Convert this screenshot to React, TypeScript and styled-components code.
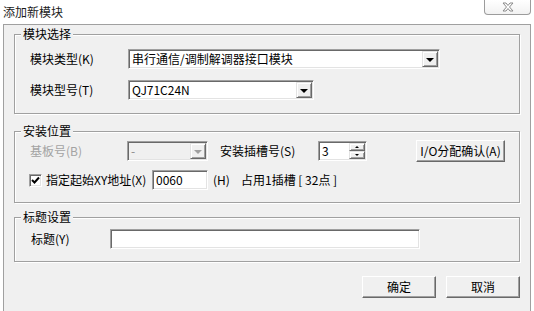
import { styled, createGlobalStyle } from "styled-components";

const GlobalStyle = createGlobalStyle`
  html, body {
    margin: 0;
    padding: 0;
    background: #ffffff;
  }
  body {
    font-family: "Noto Sans CJK SC", "Liberation Sans", sans-serif;
    font-size: 12px;
    line-height: 14px;
    color: #000000;
  }
`;

export default function App() {
  return (
    <Window>
      <GlobalStyle />
      <TitleBar>
        <Title>添加新模块</Title>
        <CloseButton>
          <svg width="12" height="10" viewBox="0 0 12 10">
            <path
              d="M1 1 H4 L6 3.5 L8 1 H11 L7.5 5 L11 9 H8 L6 6.5 L4 9 H1 L4.5 5 Z"
              fill="#ffffff"
              stroke="#8a8a8a"
              strokeWidth="1"
            />
          </svg>
        </CloseButton>
      </TitleBar>
      <Frame>
        <Group>
          <Legend>模块选择</Legend>
          <GroupBody $gap={11}>
            <Row>
              <Label $w={98}>模块类型(K)</Label>
              <Combo $w={312}>
                <ComboText>串行通信/调制解调器接口模块</ComboText>
                <DropButton>
                  <Arrow />
                </DropButton>
              </Combo>
            </Row>
            <Row>
              <Label $w={98}>模块型号(T)</Label>
              <Combo $w={186}>
                <ComboText>QJ71C24N</ComboText>
                <DropButton>
                  <Arrow />
                </DropButton>
              </Combo>
            </Row>
          </GroupBody>
        </Group>

        <Group $top={8} $bottom={12} $mt={17}>
          <Legend>安装位置</Legend>
          <GroupBody $gap={8}>
            <Row $h={22}>
              <Label $w={97} $disabled>
                基板号(B)
              </Label>
              <Combo $w={81} $disabled>
                <ComboText $disabled>-</ComboText>
                <DropButton>
                  <Arrow $disabled />
                </DropButton>
              </Combo>
              <Label $w={98} $ml={12}>
                安装插槽号(S)
              </Label>
              <Spin>
                <ComboText>3</ComboText>
                <SpinButtons>
                  <SpinButton>
                    <SmallArrow $up />
                  </SpinButton>
                  <SpinButton>
                    <SmallArrow />
                  </SpinButton>
                </SpinButtons>
              </Spin>
              <PushButton $w={89} $h={22} $ml={49}>
                I/O分配确认(A)
              </PushButton>
            </Row>
            <Row>
              <CheckBox>
                <svg width="9" height="9" viewBox="0 0 9 9">
                  <path d="M1 4 L3.5 6.5 L8 1.5" fill="none" stroke="#000" strokeWidth="2" />
                </svg>
              </CheckBox>
              <Label $w={106} $ml={4}>
                指定起始XY地址(X)
              </Label>
              <TextField $w={56}>0060</TextField>
              <Label $ml={5} $w={28}>
                (H)
              </Label>
              <Label>占用1插槽 [ 32点 ]</Label>
            </Row>
          </GroupBody>
        </Group>

        <Group $top={11} $bottom={12} $mt={14}>
          <Legend>标题设置</Legend>
          <GroupBody>
            <Row>
              <Label $w={79} $ml={1}>
                标题(Y)
              </Label>
              <TextField $w={310} />
            </Row>
          </GroupBody>
        </Group>

        <Buttons>
          <PushButton $w={74} $h={22}>
            确定
          </PushButton>
          <PushButton $w={74} $h={22}>
            取消
          </PushButton>
        </Buttons>
      </Frame>
    </Window>
  );
}

const Window = styled.div`
  width: 534px;
  height: 311px;
  background: #ffffff;
  overflow: hidden;
`;

const TitleBar = styled.div`
  display: flex;
  align-items: flex-start;
  height: 24px;
  padding: 0 3px;
`;

const Title = styled.div`
  margin-top: 5px;
  line-height: 14px;
  font-size: 12px;
  color: #1a1a1a;
`;

const CloseButton = styled.div`
  margin-left: auto;
  margin-right: 0;
  width: 45px;
  height: 14px;
  border: 1px solid #9c9c9c;
  border-top: none;
  border-radius: 0 0 4px 4px;
  background: linear-gradient(#ffffff, #f2f2f2);
  display: flex;
  align-items: center;
  justify-content: center;
`;

const Frame = styled.div`
  margin-left: 3px;
  width: 506px;
  height: 274px;
  padding: 9px 10px 11px 10px;
  border: 1px solid #a0a0a0;
  background: #f0f0f0;
  display: flex;
  flex-direction: column;
`;

const Group = styled.div<{ $top?: number; $bottom?: number; $mt?: number }>`
  position: relative;
  margin-top: ${(p) => p.$mt ?? 0}px;
  padding: ${(p) => p.$top ?? 14}px 0 ${(p) => p.$bottom ?? 13}px 15px;
  border: 1px solid #a0a0a0;
  box-shadow: 1px 1px 0 #ffffff, inset 1px 1px 0 #ffffff;
`;

const Legend = styled.span`
  position: absolute;
  top: -8px;
  left: 6px;
  padding: 0 2px;
  line-height: 14px;
  background: #f0f0f0;
`;

const GroupBody = styled.div<{ $gap?: number }>`
  display: flex;
  flex-direction: column;
  gap: ${(p) => p.$gap ?? 0}px;
`;

const Row = styled.div<{ $h?: number }>`
  display: flex;
  align-items: center;
  height: ${(p) => p.$h ?? 20}px;
`;

const Label = styled.span<{ $w?: number; $ml?: number; $disabled?: boolean }>`
  flex: none;
  ${(p) => (p.$w ? `width: ${p.$w}px;` : "")}
  margin-left: ${(p) => p.$ml ?? 0}px;
  white-space: nowrap;
  color: ${(p) => (p.$disabled ? "#a3a3a3" : "#000000")};
`;

const Sunken = styled.div`
  box-sizing: border-box;
  border: 1px solid;
  border-color: #a0a0a0 #ffffff #ffffff #a0a0a0;
  box-shadow: inset 1px 1px 0 #696969, inset -1px -1px 0 #e3e3e3;
  padding: 1px;
`;

const Combo = styled(Sunken)<{ $w: number; $disabled?: boolean }>`
  display: flex;
  width: ${(p) => p.$w}px;
  height: 20px;
  background: ${(p) => (p.$disabled ? "#f0f0f0" : "#ffffff")};
`;

const ComboText = styled.span<{ $disabled?: boolean }>`
  flex: 1;
  padding-left: 2px;
  line-height: 16px;
  white-space: nowrap;
  overflow: hidden;
  color: ${(p) => (p.$disabled ? "#8a8a8a" : "#000000")};
`;

const Raised = styled.div`
  box-sizing: border-box;
  border: 1px solid;
  border-color: #e3e3e3 #696969 #696969 #e3e3e3;
  box-shadow: inset 1px 1px 0 #ffffff, inset -1px -1px 0 #a0a0a0;
  background: #f0f0f0;
  display: flex;
  align-items: center;
  justify-content: center;
`;

const DropButton = styled(Raised)`
  width: 16px;
  height: 16px;
`;

const Arrow = styled.span<{ $disabled?: boolean }>`
  width: 0;
  height: 0;
  border-left: 4px solid transparent;
  border-right: 4px solid transparent;
  border-top: 4px solid ${(p) => (p.$disabled ? "#a0a0a0" : "#000000")};
  margin-top: 1px;
`;

const Spin = styled(Sunken)`
  display: flex;
  width: 49px;
  height: 20px;
  background: #ffffff;
`;

const SpinButtons = styled.div`
  display: flex;
  flex-direction: column;
  width: 16px;
`;

const SpinButton = styled(Raised)`
  height: 8px;
`;

const SmallArrow = styled.span<{ $up?: boolean }>`
  width: 0;
  height: 0;
  border-left: 2px solid transparent;
  border-right: 2px solid transparent;
  ${(p) => (p.$up ? "border-bottom: 2px solid #000;" : "border-top: 2px solid #000;")}
`;

const TextField = styled(Sunken)<{ $w: number }>`
  width: ${(p) => p.$w}px;
  height: 20px;
  padding-left: 3px;
  line-height: 16px;
  background: #ffffff;
`;

const CheckBox = styled(Sunken)`
  width: 13px;
  height: 13px;
  margin-left: -1px;
  background: #ffffff;
  display: flex;
  align-items: center;
  justify-content: center;
  padding: 0;
`;

const PushButton = styled(Raised)<{ $w: number; $h: number; $ml?: number }>`
  width: ${(p) => p.$w}px;
  height: ${(p) => p.$h}px;
  margin-left: ${(p) => p.$ml ?? 0}px;
  flex: none;
  white-space: nowrap;
  border-color: #ffffff #696969 #696969 #ffffff;
  box-shadow: inset -1px -1px 0 #a0a0a0;
`;

const Buttons = styled.div`
  display: flex;
  justify-content: flex-end;
  gap: 10px;
  margin-top: 14px;
`;
